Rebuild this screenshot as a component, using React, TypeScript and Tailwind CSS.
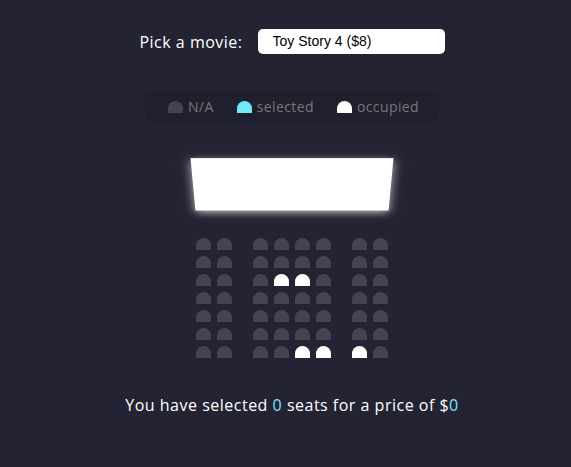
import { useState } from "react";

const occupied: Record<number, number[]> = {
  2: [3, 4],
  6: [4, 5, 6],
};

const Seat = ({ kind }: { kind: "na" | "selected" | "occupied" }) => {
  const color =
    kind === "selected" ? "bg-[#6feaf6]" : kind === "occupied" ? "bg-white" : "bg-[#444451]";
  return <div className={`h-[12px] w-[15px] m-[3px] rounded-t-[10px] ${color}`} />;
};

const App = () => {
  const [movie, setMovie] = useState("8");

  return (
    <div className="min-h-screen bg-[#242333] text-white flex flex-col items-center pl-[13px] font-['Open_Sans',sans-serif]">
      {/* movie picker */}
      <div className="mt-[29px] flex items-center">
        <label className="text-[16px] tracking-[0.5px] mr-[15px]">Pick a movie:</label>
        <select
          value={movie}
          onChange={(e) => setMovie(e.target.value)}
          className="appearance-none bg-white text-black rounded-[5px] w-[187px] h-[25px] px-[15px] text-[14px] font-['Liberation_Sans',sans-serif] outline-none"
        >
          <option value="8">Toy Story 4 ($8)</option>
          <option value="10">Avengers: Endgame ($10)</option>
          <option value="12">Joker ($12)</option>
        </select>
      </div>

      {/* legend */}
      <ul className="mt-[37px] flex bg-black/10 rounded-[5px] px-[10px] py-[5px] text-[14px] tracking-[0.4px] text-[#777]">
        <li className="flex items-center mx-[10px]">
          <Seat kind="na" />
          <small className="ml-[2px] text-[14px]">N/A</small>
        </li>
        <li className="flex items-center mx-[10px]">
          <Seat kind="selected" />
          <small className="ml-[2px] text-[14px]">selected</small>
        </li>
        <li className="flex items-center mx-[10px]">
          <Seat kind="occupied" />
          <small className="ml-[2px] text-[14px]">occupied</small>
        </li>
      </ul>

      {/* screen + seats */}
      <div className="[perspective:1000px]">
        <div className="h-[70px] w-full bg-white mt-[28px] mb-[15px] shadow-[0_3px_10px_rgba(255,255,255,0.7)] [transform:rotateX(-45deg)]" />
        {Array.from({ length: 7 }).map((_, r) => (
          <div key={r} className="flex">
            {Array.from({ length: 8 }).map((_, s) => (
              <div key={s} className={s === 1 ? "mr-[15px]" : s === 6 ? "ml-[15px]" : ""}>
                <Seat kind={occupied[r]?.includes(s) ? "occupied" : "na"} />
              </div>
            ))}
          </div>
        ))}
      </div>

      <p className="mt-[32px] text-[16px] tracking-[0.5px]">
        You have selected <span className="text-[#6feaf6]">0</span> seats for a price of $
        <span className="text-[#6feaf6]">0</span>
      </p>
    </div>
  );
};

export default App;
